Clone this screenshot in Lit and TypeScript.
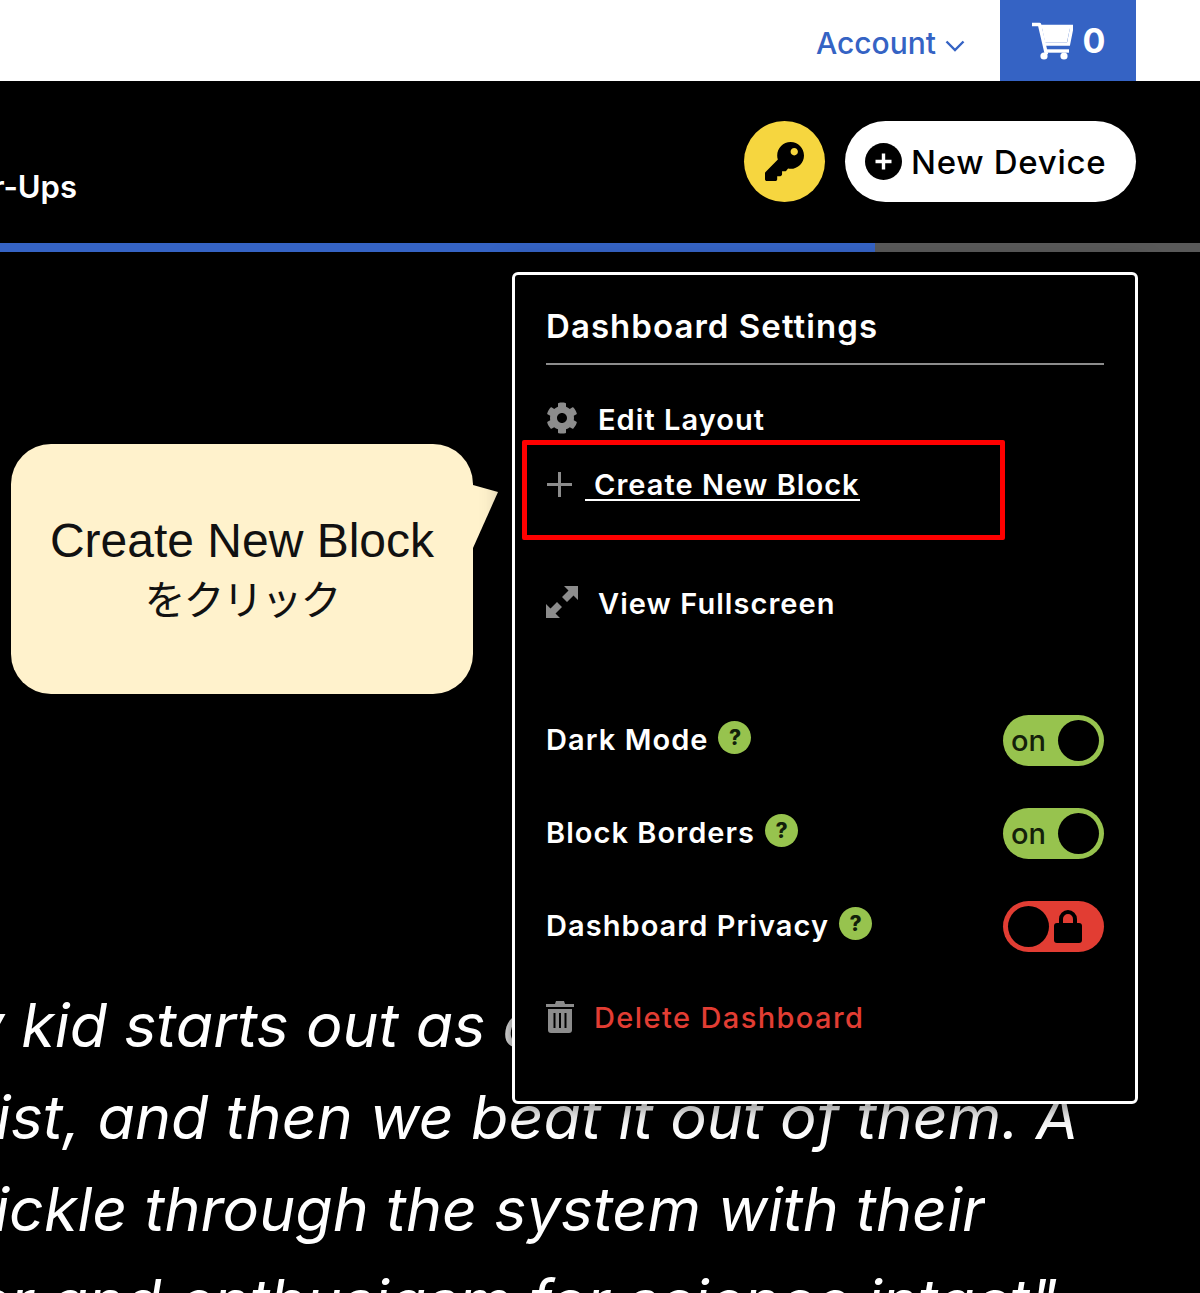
import { LitElement, html, css } from "lit";
import { customElement } from "lit/decorators.js";

const KEY = "M512 176.001C512 273.203 433.202 352 336 352c-11.22 0-22.19-1.062-32.827-3.069l-24.012 27.014A23.999 23.999 0 0 1 261.223 384H224v40c0 13.255-10.745 24-24 24h-40v40c0 13.255-10.745 24-24 24H24c-13.255 0-24-10.745-24-24v-78.059c0-6.365 2.529-12.47 7.029-16.971l161.802-161.802C163.108 213.814 160 195.271 160 176 160 78.798 238.797.001 335.999 0 433.488-.001 512 78.511 512 176.001zM336 128c0 26.51 21.49 48 48 48s48-21.49 48-48-21.49-48-48-48-48 21.49-48 48z";
const COG = "M487.4 315.7l-42.6-24.6c4.3-23.2 4.3-47 0-70.2l42.6-24.6c4.9-2.8 7.1-8.6 5.5-14-11.1-35.6-30-67.8-54.7-94.6-3.8-4.1-10-5.1-14.8-2.3L380.8 110c-17.9-15.4-38.5-27.3-60.8-35.1V25.8c0-5.6-3.9-10.5-9.4-11.7-36.7-8.2-74.3-7.8-109.2 0-5.5 1.2-9.4 6.1-9.4 11.7V75c-22.2 7.9-42.8 19.8-60.8 35.1L88.7 85.5c-4.9-2.8-11-1.9-14.8 2.3-24.7 26.7-43.6 58.9-54.7 94.6-1.7 5.4.6 11.2 5.5 14L67.3 221c-4.3 23.2-4.3 47 0 70.2l-42.6 24.6c-4.9 2.8-7.1 8.6-5.5 14 11.1 35.6 30 67.8 54.7 94.6 3.8 4.1 10 5.1 14.8 2.3l42.6-24.6c17.9 15.4 38.5 27.3 60.8 35.1v49.2c0 5.6 3.9 10.5 9.4 11.7 36.7 8.2 74.3 7.8 109.2 0 5.5-1.2 9.4-6.1 9.4-11.7v-49.2c22.2-7.9 42.8-19.8 60.8-35.1l42.6 24.6c4.9 2.8 11 1.9 14.8-2.3 24.7-26.7 43.6-58.9 54.7-94.6 1.5-5.5-.7-11.3-5.6-14.1zM256 336c-44.1 0-80-35.9-80-80s35.9-80 80-80 80 35.9 80 80-35.9 80-80 80z";

@customElement("app-root")
export class AppRoot extends LitElement {
  static styles = css`
    :host {
      display: block;
      position: relative;
      width: 1200px;
      height: 1293px;
      overflow: hidden;
      background: #000;
      font-family: "Inter", "Lato", sans-serif;
      color: #fff;
    }
    .topbar {
      height: 81px;
      background: #fff;
      display: flex;
      justify-content: flex-end;
      align-items: stretch;
      padding-right: 64px;
    }
    .account {
      display: flex;
      align-items: center;
      gap: 9px;
      margin-right: 35px;
      color: #3563c4;
      font-size: 30px;
      font-weight: 500;
      padding-top: 5px;
      line-height: 40px;
      box-sizing: border-box;
      height: 100%;
    }
    .chev { margin-top: 6px; }
    .cart {
      width: 136px;
      background: #3563c4;
      display: flex;
      align-items: center;
      justify-content: center;
      gap: 10px;
      font-size: 34px;
      font-weight: 700;
      color: #fff;
    }
    .nav {
      height: 162px;
      display: flex;
      align-items: flex-start;
      justify-content: space-between;
      padding-right: 64px;
    }
    .nav-left {
      width: 77px;
      height: 44px;
      margin-top: 84px;
      overflow: hidden;
      display: flex;
      justify-content: flex-end;
      font-size: 31px;
      font-weight: 600;
      line-height: 44px;
      white-space: nowrap;
    }
    .nav-right {
      display: flex;
      gap: 20px;
      margin-top: 40px;
    }
    .keybtn {
      width: 81px;
      height: 81px;
      border-radius: 50%;
      background: #f6d63f;
      display: flex;
      align-items: center;
      justify-content: center;
    }
    .newdev {
      width: 291px;
      height: 81px;
      box-sizing: border-box;
      border-radius: 41px;
      background: #fff;
      color: #000;
      display: flex;
      align-items: center;
      padding-left: 20px;
      gap: 9px;
      font-size: 33px;
      font-weight: 500;
      letter-spacing: 0.7px;
    }
    .progress {
      height: 9px;
      background: #595959;
    }
    .progress-fill {
      width: 875px;
      height: 100%;
      background: #3563c4;
    }
    .quote {
      margin-top: 727px;
      font-size: 61px;
      font-style: italic;
      font-weight: 400;
      line-height: 92px;
    }
    .ql {
      display: flex;
      justify-content: flex-end;
      overflow: hidden;
      white-space: nowrap;
    }
    .l1 { width: 540px; }
    .l2 { width: 1078px; }
    .l3 { width: 985px; }
    .l4 { width: 1058px; }

    .menu {
      position: absolute;
      left: 512px;
      top: 272px;
      width: 626px;
      height: 832px;
      box-sizing: border-box;
      border: 3px solid #fff;
      border-radius: 6px;
      background: #000;
      box-shadow: 0 0 24px 4px rgba(0, 0, 0, 0.55);
      padding: 0 31px;
      display: flex;
      flex-direction: column;
      font-weight: 600;
      font-size: 29px;
      letter-spacing: 1.05px;
    }
    .title {
      font-size: 33px;
      line-height: 40px;
      margin-top: 31px;
      padding-bottom: 17px;
      border-bottom: 2px solid #8c8c8c;
    }
    .row {
      display: flex;
      align-items: center;
      height: 40px;
      white-space: nowrap;
    }
    .t { padding-top: 2px; }
    .r-edit { margin-top: 33px; gap: 20px; }
    .r-create { margin-top: 26px; }
    .r-full { margin-top: 78px; gap: 20px; }
    .r-dark { margin-top: 96px; }
    .r-block { margin-top: 53px; }
    .r-priv { margin-top: 53px; }
    .r-del { margin-top: 52px; gap: 20px; color: #e23d33; font-weight: 500; letter-spacing: 1.4px; }
    .link {
      margin-left: 12px;
      padding: 4px 0 0 9px;
      border-bottom: 2px solid #fff;
      line-height: 28px;
    }
    .q {
      width: 33px;
      height: 33px;
      border-radius: 50%;
      background: #97c34e;
      color: #12200a;
      font-size: 21px;
      font-weight: 800;
      letter-spacing: 0;
      display: flex;
      align-items: center;
      justify-content: center;
      margin-left: 10px;
      margin-bottom: 2px;
    }
    .toggle {
      margin-left: auto;
      width: 101px;
      height: 51px;
      border-radius: 26px;
      box-sizing: border-box;
      padding: 5px;
      display: flex;
      align-items: center;
      justify-content: space-between;
      color: #14200a;
      font-size: 29px;
      font-weight: 500;
      letter-spacing: 0;
      margin-top: 4px;
    }
    .on { background: #97c34e; padding-left: 8px; }
    .off { background: #e23d33; padding-right: 22px; }
    .knob {
      width: 41px;
      height: 41px;
      border-radius: 50%;
      background: #000;
    }

    .callout {
      position: absolute;
      left: 11px;
      top: 444px;
      width: 462px;
      height: 250px;
      box-sizing: border-box;
      border-radius: 40px;
      background: #fff2cc;
      color: #111;
      display: flex;
      flex-direction: column;
      align-items: center;
      justify-content: center;
      font-family: "Liberation Sans", "Noto Sans CJK JP", sans-serif;
      font-size: 48px;
      line-height: 56px;
    }
    .jp {
      font-family: "Noto Sans CJK JP", sans-serif;
      font-size: 41px;
      letter-spacing: -2px;
    }
    .tail {
      position: absolute;
      left: 461px;
      top: 41px;
    }
    .redbox {
      position: absolute;
      left: 522px;
      top: 440px;
      width: 483px;
      height: 100px;
      box-sizing: border-box;
      border: 5px solid #f00;
      border-radius: 2px;
    }
  `;

  private toggle(on: boolean) {
    return on
      ? html`<div class="toggle on"><span>on</span><span class="knob"></span></div>`
      : html`<div class="toggle off"><span class="knob"></span>
          <svg width="28" height="33" viewBox="0 0 28 33">
            <path d="M7 15V9a7 7 0 0 1 14 0v6" fill="none" stroke="#000" stroke-width="4"/>
            <rect x="0" y="13" width="28" height="20" rx="3" fill="#000"/>
          </svg></div>`;
  }

  render() {
    return html`
      <div class="topbar">
        <div class="account">Account
          <svg class="chev" width="20" height="12" viewBox="0 0 20 12"><path d="M1.500 1.500L10 10l8.500-8.500" fill="none" stroke="#3563c4" stroke-width="2.400"/></svg>
        </div>
        <div class="cart">
          <svg width="42" height="38" viewBox="0 0 42 38">
            <path d="M1 2.500h7.500l7 30" fill="none" stroke="#fff" stroke-width="3.400" stroke-linejoin="round"/>
            <path d="M9.500 4.500H41L37.500 22H13" fill="none" stroke="#fff" stroke-width="3.400"/>
            <path d="M11 6h28l-3 14H14z" fill="#fff"/>
            <path d="M15 29h23" stroke="#fff" stroke-width="3.400"/>
            <circle cx="13" cy="34" r="3.600" fill="#fff"/><circle cx="33" cy="34" r="3.600" fill="#fff"/>
          </svg>
          <span>0</span>
        </div>
      </div>

      <div class="nav">
        <div class="nav-left"><span>Power-Ups</span></div>
        <div class="nav-right">
          <div class="keybtn"><svg width="39" height="39" viewBox="0 0 512 512"><path d=${KEY} fill="#000"/></svg></div>
          <div class="newdev">
            <svg width="37" height="37" viewBox="0 0 37 37"><circle cx="18.500" cy="18.500" r="18.500" fill="#000"/><path d="M18.500 10.500v16M10.500 18.500h16" stroke="#fff" stroke-width="3.400"/></svg>
            <span>New Device</span>
          </div>
        </div>
      </div>

      <div class="progress"><div class="progress-fill"></div></div>

      <div class="quote">
        <div class="ql l1"><span>Every kid starts out as a</span></div>
        <div class="ql l2"><span>natural-born scientist, and then we beat it out of them. A</span></div>
        <div class="ql l3"><span>few trickle through the system with their</span></div>
        <div class="ql l4"><span>wonder and enthusiasm for science intact"</span></div>
      </div>

      <div class="callout">
        <div>Create New Block</div>
        <div class="jp">をクリック</div>
        <svg class="tail" width="27" height="64" viewBox="0 0 27 64"><path d="M0 0L1 0L26 7L1 63L0 63z" fill="#fff2cc"/></svg>
      </div>

      <div class="menu">
        <div class="title">Dashboard Settings</div>
        <div class="row r-edit">
          <svg width="32" height="32" viewBox="0 0 512 512"><path d=${COG} fill="#8c8c8c"/></svg>
          <span class="t">Edit Layout</span>
        </div>
        <div class="row r-create">
          <svg width="27" height="27" viewBox="0 0 27 27"><path d="M13.500 1v25M1 13.500h25" stroke="#8c8c8c" stroke-width="3"/></svg>
          <span class="link">Create New Block</span>
        </div>
        <div class="row r-full">
          <svg width="32" height="32" viewBox="0 0 32 32">
            <path d="M18 0h14v14l-4.500-4.500-6.500 6.500-5-5 6.500-6.500z M0 32V18l4.500 4.500 6.500-6.500 5 5-6.500 6.500L14 32z" fill="#8c8c8c"/>
          </svg>
          <span class="t">View Fullscreen</span>
        </div>
        <div class="row r-dark"><span class="t">Dark Mode</span><span class="q">?</span>${this.toggle(true)}</div>
        <div class="row r-block"><span class="t">Block Borders</span><span class="q">?</span>${this.toggle(true)}</div>
        <div class="row r-priv"><span class="t">Dashboard Privacy</span><span class="q">?</span>${this.toggle(false)}</div>
        <div class="row r-del">
          <svg width="28" height="33" viewBox="0 0 28 33">
            <path d="M0 4h9l1-3h8l1 3h9v3H0z" fill="#8c8c8c"/>
            <path d="M2 9h24v21a3 3 0 0 1-3 3H5a3 3 0 0 1-3-3z" fill="#8c8c8c"/>
            <path d="M8.500 13v15M14 13v15M19.500 13v15" stroke="#000" stroke-width="2"/>
          </svg>
          <span class="t">Delete Dashboard</span>
        </div>
      </div>

      <div class="redbox"></div>
    `;
  }
}
